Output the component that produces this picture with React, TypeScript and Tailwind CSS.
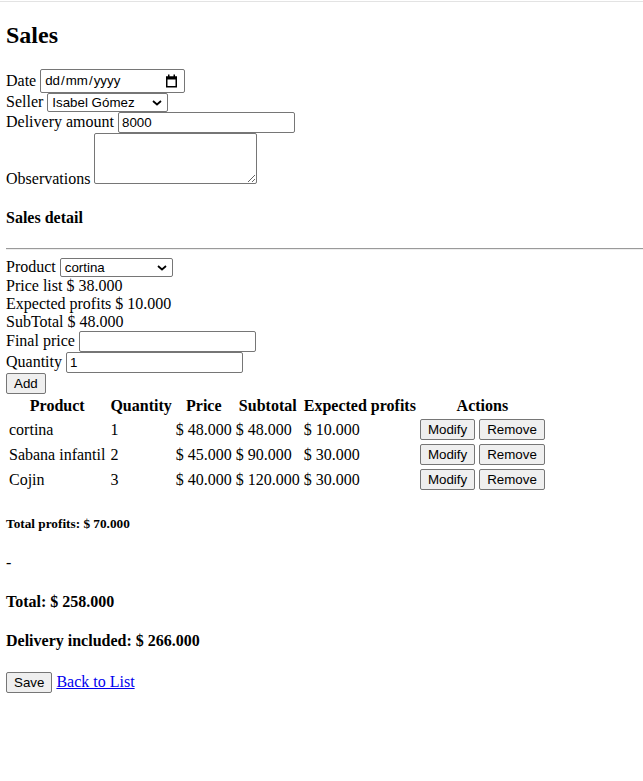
import React from "react";

const ctl = "font-['Liberation_Sans',Arial,sans-serif] text-[13.33px] text-black leading-[normal]";
const input = `${ctl} h-[21px] w-[177px] border border-[#767676] rounded-[2px] bg-white px-[3px] align-baseline`;
const button = `${ctl} h-[21px] border border-[#767676] rounded-[2px] bg-[#efefef] px-[7px] align-baseline`;

type Row = {
  product: string;
  quantity: number;
  price: string;
  subtotal: string;
  profits: string;
};

const rows: Row[] = [
  { product: "cortina", quantity: 1, price: "$ 48.000", subtotal: "$ 48.000", profits: "$ 10.000" },
  { product: "Sabana infantil", quantity: 2, price: "$ 45.000", subtotal: "$ 90.000", profits: "$ 30.000" },
  { product: "Cojin", quantity: 3, price: "$ 40.000", subtotal: "$ 120.000", profits: "$ 30.000" },
];

const Chevron = () => (
  <svg
    className="absolute right-[6px] top-[7px] pointer-events-none"
    width="10"
    height="6"
    viewBox="0 0 10 6"
  >
    <path d="M1 1l4 3.5L9 1" fill="none" stroke="#000" strokeWidth="1.8" />
  </svg>
);

const Select = ({ value, width }: { value: string; width: string }) => (
  <span className="relative inline-block align-baseline">
    <select
      className={`${ctl} appearance-none h-[19px] ${width} border border-[#767676] rounded-[2px] bg-white pl-[4px] pr-[18px]`}
      defaultValue={value}
    >
      <option>{value}</option>
    </select>
    <Chevron />
  </span>
);

const DateInput = () => (
  <span
    className={`${ctl} inline-flex items-center h-[24px] w-[145px] border border-[#767676] rounded-[2px] bg-white pl-[4px] pr-[6px] align-baseline`}
  >
    <span>dd</span>
    <span className="px-[1px]">/</span>
    <span>mm</span>
    <span className="px-[1px]">/</span>
    <span>yyyy</span>
    <svg className="ml-auto" width="13" height="14" viewBox="0 0 13 14">
      <rect x="1.75" y="3.25" width="9.5" height="9.5" fill="none" stroke="#000" strokeWidth="1.5" />
      <rect x="1" y="2.5" width="11" height="3" fill="#000" />
      <rect x="3" y="0.5" width="1.5" height="2.5" fill="#000" />
      <rect x="8.5" y="0.5" width="1.5" height="2.5" fill="#000" />
    </svg>
  </span>
);

export default function App() {
  return (
    <div className="min-h-[781px] bg-white text-black text-[16px] leading-[normal] font-['Liberation_Serif','Times_New_Roman',serif]">
      <div className="h-px mt-px bg-[#e3e3e3]" />
      <div className="px-[6px]">
        <h2 className="mt-[20px] mb-[19.92px] text-[24px] font-bold">Sales</h2>

        <div>
          Date <DateInput />
        </div>
        <div>
          Seller <Select value="Isabel Gómez" width="w-[121px]" />
        </div>
        <div>
          Delivery amount <input className={input} defaultValue="8000" />
        </div>
        <div>
          Observations{" "}
          <textarea className={`${ctl} resize h-[51px] w-[163px] border border-[#767676] rounded-[2px] bg-white align-baseline`} />
        </div>

        <h4 className="my-[21.28px] font-bold">Sales detail</h4>
        <hr className="my-[8px] -mr-[6px] border-t border-b border-t-[#9a9a9a] border-b-[#eeeeee]" />

        <div>
          Product <Select value="cortina" width="w-[113px]" />
        </div>
        <div>Price list $ 38.000</div>
        <div>Expected profits $ 10.000</div>
        <div>SubTotal $ 48.000</div>
        <div>
          Final price <input className={input} />
        </div>
        <div>
          Quantity <input className={input} defaultValue="1" />
        </div>
        <div>
          <button className={button}>Add</button>
        </div>

        <table className="border-separate border-spacing-[2px]">
          <thead>
            <tr>
              <th className="p-px pr-[2px] font-bold text-center">Product</th>
              <th className="p-px font-bold text-center">Quantity</th>
              <th className="p-px font-bold text-center">Price</th>
              <th className="p-px font-bold text-center">Subtotal</th>
              <th className="p-px font-bold text-center">Expected profits</th>
              <th className="p-px font-bold text-center">Actions</th>
            </tr>
          </thead>
          <tbody>
            {rows.map((row, index) => (
              <tr key={index}>
                <td className="p-px pr-[2px] align-middle">{row.product}</td>
                <td className="p-px align-middle">{row.quantity}</td>
                <td className="p-px align-middle">{row.price}</td>
                <td className="p-px align-middle">{row.subtotal}</td>
                <td className="p-px align-middle">{row.profits}</td>
                <td className="p-px align-middle">
                  <button className={button}>Modify</button>{" "}
                  <button className={button}>Remove</button>
                </td>
              </tr>
            ))}
          </tbody>
        </table>

        <h5 className="my-[22.18px] text-[13.28px] font-bold">Total profits: $ 70.000</h5>
        <p className="my-[16px]">-</p>
        <h4 className="my-[21.28px] font-bold">Total: $ 258.000</h4>
        <h4 className="my-[21.28px] font-bold">Delivery included: $ 266.000</h4>

        <div>
          <button className={button}>Save</button>{" "}
          <a href="#" className="text-[#0000ee] underline">
            Back to List
          </a>
        </div>
      </div>
    </div>
  );
}
